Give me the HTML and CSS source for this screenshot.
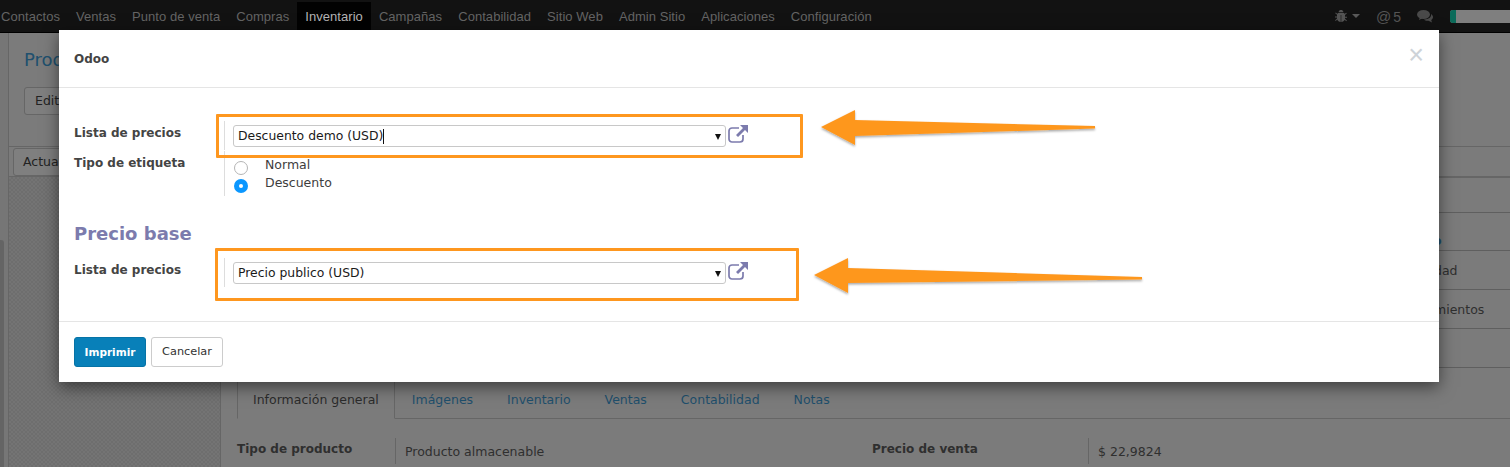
FILE: index.html
```html
<!DOCTYPE html>
<html lang="es">
<head>
<meta charset="utf-8">
<title>Odoo</title>
<link rel="stylesheet" href="styles.css">
</head>
<body>
<div class="page">
  <nav class="navbar">
    <a class="nav-item">Contactos</a><a class="nav-item">Ventas</a><a class="nav-item">Punto de venta</a><a class="nav-item">Compras</a><a class="nav-item active">Inventario</a><a class="nav-item">Campañas</a><a class="nav-item">Contabilidad</a><a class="nav-item">Sitio Web</a><a class="nav-item">Admin Sitio</a><a class="nav-item">Aplicaciones</a><a class="nav-item">Configuración</a>
    <div class="nav-right">
      <svg class="bug" width="12" height="14" viewBox="0 0 12 14"><path d="M3.500 3.200C3.800 1.600 4.800 1 6 1s2.200.6 2.500 2.200zM2.800 4h6.400l.4 1 1.600-1.300.6.7-1.800 1.600v1.700h2v1h-2v1.100l1.900 1.700-.6.7-1.600-1.400C9.300 12 8 13 6.300 13V6H5.700v7C4 13 2.700 12 2.300 10.600L.7 12l-.6-.7L2 9.600V8.500H0v-1h2V5.800L.2 4.200l.6-.7L2.400 5z" fill="#555"/></svg>
      <span class="caret"></span>
      <span class="mentions"><span class="at">@</span><span class="count">5</span></span>
      <svg class="chat" width="16" height="13" viewBox="0 0 16 13"><ellipse cx="6.500" cy="4.500" rx="6.500" ry="4.500" fill="#4a4a4a"/><path d="M3 7l-1 3 4-2z" fill="#4a4a4a"/><path d="M14 4c1.300.8 2 1.900 2 3 0 1.300-.8 2.300-1.800 3l.8 2.500-3.500-1.800c-2 .2-3.600-.3-4.700-1.300 4 .3 8-1.700 7.200-5.400z" fill="#4a4a4a"/></svg>
      <span class="avatar"><span class="avatar-mark"></span></span>
    </div>
  </nav>
  <div class="app">
    <aside class="side"><span class="side-handle"></span></aside>
    <main class="main">
      <header class="control">
        <h1 class="crumb">Prod</h1>
        <div class="btn-row"><span class="ghost-btn">Edita</span></div>
        <div class="sub-row"><span class="ghost-btn">Actual</span></div>
      </header>
      <section class="content">
        <div class="sheet">
          <div class="stats">
            <div class="stat stat-head">o</div>
            <div class="stat">dad</div>
            <div class="stat">mientos</div>
            <div class="stat"></div>
          </div>
          <div class="tabs">
            <span class="tab current">Información general</span>
            <span class="tab">Imágenes</span>
            <span class="tab">Inventario</span>
            <span class="tab">Ventas</span>
            <span class="tab">Contabilidad</span>
            <span class="tab">Notas</span>
          </div>
          <div class="info">
            <b class="info-label">Tipo de producto</b>
            <span class="info-value">Producto almacenable</span>
            <b class="info-label price-label">Precio de venta</b>
            <span class="info-value">$ 22,9824</span>
          </div>
        </div>
      </section>
    </main>
  </div>

  <div class="dialog">
    <div class="dialog-head">
      <h4 class="dialog-title">Odoo</h4>
      <span class="close">×</span>
    </div>
    <div class="dialog-body">
      <div class="form-row row-list">
        <label class="form-label">Lista de precios</label>
        <div class="form-field">
          <div class="select"><span class="select-text">Descuento demo (USD)</span><span class="text-cursor"></span><span class="select-caret"></span></div>
          <svg class="ext" width="20" height="18" viewBox="0 0 20 18"><path d="M15 10v4a3 3 0 0 1-3 3H4a3 3 0 0 1-3-3V6a3 3 0 0 1 3-3h7" fill="none" stroke="#7c7bad" stroke-width="1.700"/><path d="M12 0h8v8l-3-3-7 7-2-2 7-7z" fill="#7c7bad"/></svg>
        </div>
      </div>
      <div class="form-row row-type">
        <label class="form-label">Tipo de etiqueta</label>
        <div class="form-field radios">
          <div class="radio-row"><span class="radio"></span><span class="radio-text">Normal</span></div>
          <div class="radio-row"><span class="radio on"></span><span class="radio-text">Descuento</span></div>
        </div>
      </div>
      <h2 class="section-title">Precio base</h2>
      <div class="form-row row-list">
        <label class="form-label">Lista de precios</label>
        <div class="form-field">
          <div class="select"><span class="select-text">Precio publico (USD)</span><span class="select-caret"></span></div>
          <svg class="ext" width="20" height="18" viewBox="0 0 20 18"><path d="M15 10v4a3 3 0 0 1-3 3H4a3 3 0 0 1-3-3V6a3 3 0 0 1 3-3h7" fill="none" stroke="#7c7bad" stroke-width="1.700"/><path d="M12 0h8v8l-3-3-7 7-2-2 7-7z" fill="#7c7bad"/></svg>
        </div>
      </div>
    </div>
    <div class="dialog-foot">
      <span class="btn primary">Imprimir</span>
      <span class="btn">Cancelar</span>
    </div>
  </div>

  <span class="mark mark-one"></span>
  <span class="mark mark-two"></span>
  <svg class="arrows" width="1510" height="467" viewBox="0 0 1510 467">
    <defs><filter id="s" x="-5%" y="-20%" width="110%" height="150%"><feDropShadow dx="0" dy="1.500" stdDeviation="1.200" flood-color="#000" flood-opacity=".35"/></filter></defs>
    <path d="M821 127L855 110 855 120 1095 126 1095 128.500 855 136 855 145z" fill="#fe971f" filter="url(#s)"/>
    <path d="M814 275L848 258 848 268 1142 277 1142 279.500 848 283 848 293z" fill="#fe971f" filter="url(#s)"/>
  </svg>
</div>
</body>
</html>
```

FILE: styles.css
```css
* { box-sizing: border-box; }
html, body { margin: 0; padding: 0; }
body { font-family: "DejaVu Sans", sans-serif; font-size: 13px; color: #2f2f2f; background: #7b7b7b; overflow: hidden; }
.page { position: relative; width: 1510px; height: 467px; overflow: hidden; }

.navbar { display: flex; align-items: stretch; height: 33px; background: #121212; border-bottom: 1px solid #000; font-family: "Liberation Sans", sans-serif; font-size: 13px; letter-spacing: .05px; }
.nav-item { padding: 9px 8px 0; color: #646464; white-space: nowrap; }
.nav-item:first-child { padding-left: 1px; }
.nav-item.active { background: #020202; color: #b4b4b4; margin-top: 2px; padding-top: 7px; }
.nav-right { margin-left: auto; display: flex; align-items: center; }
.bug { margin-right: 5px; }
.caret { width: 0; height: 0; border: 4px solid transparent; border-top-color: #5a5a5a; border-bottom: 0; margin-right: 16px; }
.mentions { color: #555; margin-right: 16px; display: flex; align-items: baseline; gap: 2px; }
.at { font-size: 15px; }
.count { font-size: 14px; }
.chat { margin-right: 17px; }
.avatar { width: 60px; height: 13px; background: #7f7f7f; border-radius: 3px 0 0 3px; overflow: hidden; display: block; }
.avatar-mark { display: block; width: 6px; height: 13px; background: #0b6b5a; }

.app { display: flex; height: 434px; }
.side { width: 9px; background: #767676; border-right: 1px solid #666; position: relative; flex: none; }
.side-handle { position: absolute; left: 0; top: 207px; width: 4px; height: 227px; background: #646464; border-radius: 0 3px 0 0; }
.main { flex: 1; display: flex; flex-direction: column; min-width: 0; }
.control { height: 144px; background: #7b7b7b; flex: none; padding: 16px 0 0 15px; border-bottom: 1px solid #666; }
.crumb { margin: 0; font-size: 18px; font-weight: 400; line-height: 22px; color: #20506e; }
.btn-row { margin-top: 16px; }
.sub-row { margin: 31px 0 0 -15px; padding: 1px 0 0 4px; border-top: 1px solid #666; }
.ghost-btn { display: inline-block; height: 28px; padding: 4px 10px; font-size: 12.500px; line-height: 18px; border: 1px solid #666; border-radius: 3px; color: #222; background: #7f7f7f; }
.sub-row .ghost-btn { padding-left: 9px; }

.content { flex: 1; display: flex; padding: 0 26px 0 211px; background-color: #747474; background-image: linear-gradient(45deg, #6e6e6e 25%, transparent 25%, transparent 75%, #6e6e6e 75%), linear-gradient(45deg, #6e6e6e 25%, transparent 25%, transparent 75%, #6e6e6e 75%); background-size: 4px 4px; background-position: 0 0, 2px 2px; }
.sheet { flex: 1; background: #7b7b7b; border: 1px solid #666; border-bottom: 0; padding: 34px 16px 0 16px; }
.stats { margin-left: 800px; border: 1px solid #5f5f5f; border-bottom: 0; height: 156px; }
.stat { height: 39px; border-bottom: 1px solid #5f5f5f; padding: 12px 0 0 396px; font-size: 12.500px; line-height: 15px; white-space: nowrap; }
.stat-head { height: 38px; padding: 20px 0 0 395px; font-weight: 700; color: #1f4f6c; }
.tabs { display: flex; height: 51px; border-bottom: 1px solid #666; font-size: 12.500px; }
.tab { padding: 24px 17px 0; color: #1f4f6c; line-height: 16px; }
.tab.current { color: #2b2b2b; padding: 24px 15px 0; border-left: 1px solid #666; border-right: 1px solid #666; border-bottom: 1px solid #7b7b7b; height: 51px; }
.info { display: flex; margin-top: 19px; line-height: 16px; font-size: 12.500px; }
.info-label { width: 158px; font-size: 12px; font-weight: 700; padding-top: 3px; flex: none; }
.info-value { border-left: 1px solid #666; padding: 6px 0 4px 9px; width: 477px; flex: none; }
.price-label { width: 216px; }

.dialog { position: absolute; left: 59px; top: 30px; width: 1380px; height: 352px; background: #fff; box-shadow: 0 5px 15px rgba(0,0,0,.5); display: flex; flex-direction: column; }
.dialog-head { height: 58px; border-bottom: 1px solid #e5e5e5; padding: 0 15px; display: flex; justify-content: space-between; flex: none; }
.dialog-title { margin: 21px 0 0; font-size: 12px; font-weight: 700; line-height: 16px; color: #444; }
.close { font-family: "Liberation Sans", sans-serif; font-size: 27px; line-height: 27px; color: #ced3d8; margin-top: 12px; }
.dialog-body { flex: 1; padding: 37px 15px 0; }
.form-row { display: flex; }
.form-label { width: 150px; flex: none; font-weight: 700; font-size: 12px; line-height: 16px; color: #444; }
.form-field { border-left: 1px solid #ddd; padding-left: 8px; display: flex; align-items: flex-start; margin-top: -4px; padding-top: 4px; }
.row-list .form-field { height: 29px; }
.row-list { height: 25px; }
.select { position: relative; width: 493px; height: 22px; border: 1px solid #c8c8c8; border-radius: 3px; padding: 0 4px; line-height: 20px; font-size: 12.400px; color: #1a1a1a; display: flex; align-items: center; flex: none; }
.text-cursor { width: 1px; height: 15px; background: #111; }
.select-caret { position: absolute; right: 4px; top: 8px; width: 0; height: 0; border: 3.500px solid transparent; border-top: 6px solid #111; border-bottom: 0; }
.ext { margin: 0 0 0 2px; flex: none; }
.row-type { margin-top: 5px; }
.radios { flex-direction: column; height: 45px; padding-left: 9px; }
.radio-row { display: flex; height: 18px; flex: none; }
.radio { width: 14px; height: 14px; border-radius: 50%; border: 1.500px solid #b5b5b5; margin: 6px 17px 0 0; flex: none; }
.radio.on { background: #0b97ff; border: 0; position: relative; }
.radio.on::after { content: ""; position: absolute; left: 5px; top: 5px; width: 4px; height: 4px; background: #fff; border-radius: 50%; }
.radio-text { line-height: 16px; padding-top: 2px; color: #3d3d3d; font-size: 12.500px; }
.section-title { margin: 25px 0 0; font-size: 18px; font-weight: 700; line-height: 26px; color: #7c7bad; }
.section-title + .form-row { margin-top: 15px; }

.dialog-foot { height: 61px; border-top: 1px solid #e5e5e5; padding: 15px 15px 0; display: flex; gap: 5px; flex: none; }
.btn { height: 30px; width: 72px; text-align: center; font-size: 11.300px; line-height: 28px; border: 1px solid #ccc; border-radius: 3px; color: #333; }
.btn.primary { background: #0880b9; border-color: #0673a6; color: #fff; font-weight: 700; font-size: 10.500px; }

.mark { position: absolute; border: 3px solid #fe971f; border-radius: 1px; }
.mark-one { left: 216px; top: 114px; width: 587px; height: 44px; }
.mark-two { left: 215px; top: 248px; width: 584px; height: 53px; }
.arrows { position: absolute; left: 0; top: 0; pointer-events: none; }
```
